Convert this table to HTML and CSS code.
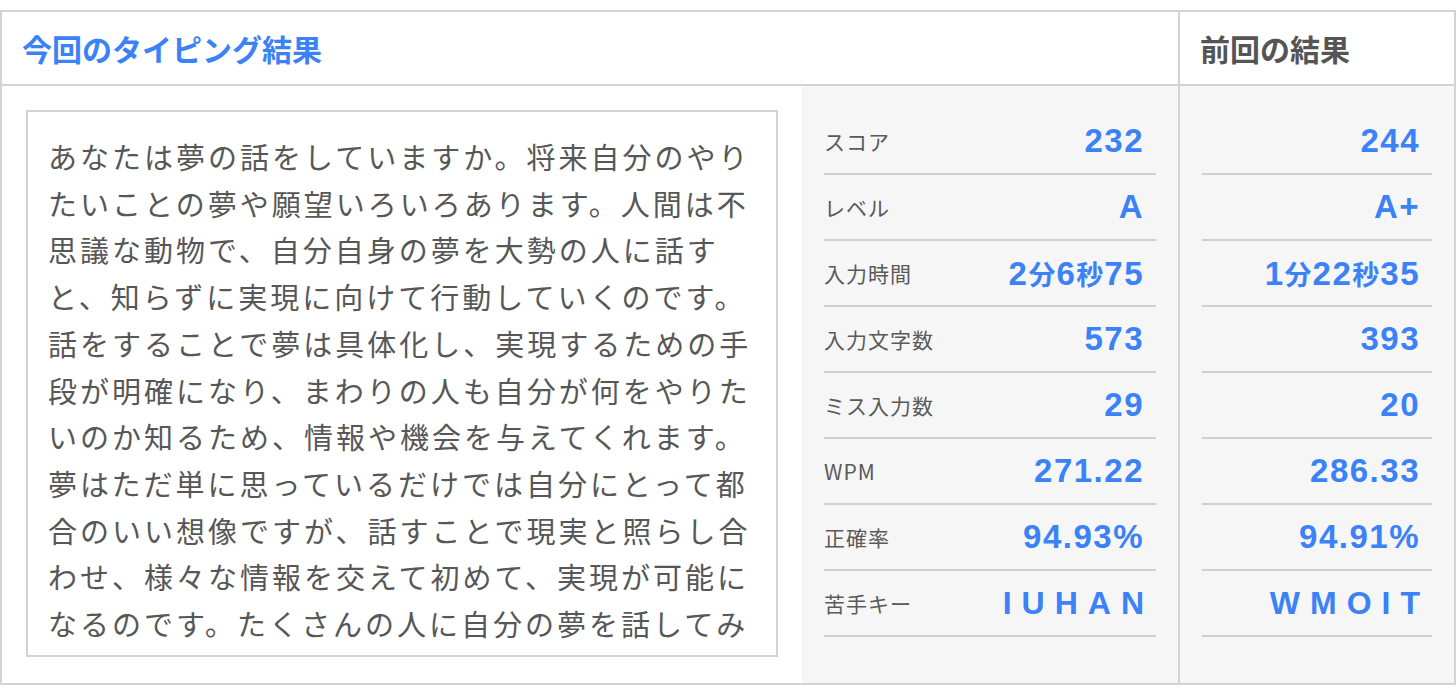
FILE: index.html
```html
<!DOCTYPE html>
<html lang="ja">
<head>
<meta charset="utf-8">
<title>タイピング結果</title>
<link rel="stylesheet" href="styles.css">
</head>
<body>
<div class="board">
  <div class="head head-current">今回のタイピング結果</div>
  <div class="head head-prev">前回の結果</div>
  <div class="current">
    <div class="text-col">
      <div class="text-box">あなたは夢の話をしていますか。将来自分のやりたいことの夢や願望いろいろあります。人間は不思議な動物で、自分自身の夢を大勢の人に話すと、知らずに実現に向けて行動していくのです。話をすることで夢は具体化し、実現するための手段が明確になり、まわりの人も自分が何をやりたいのか知るため、情報や機会を与えてくれます。夢はただ単に思っているだけでは自分にとって都合のいい想像ですが、話すことで現実と照らし合わせ、様々な情報を交えて初めて、実現が可能になるのです。たくさんの人に自分の夢を話してみることから始めましょう。</div>
    </div>
    <div class="stats">
      <div class="row"><span class="label">スコア</span><span class="value">232</span></div>
      <div class="row"><span class="label">レベル</span><span class="value">A</span></div>
      <div class="row"><span class="label">入力時間</span><span class="value">2<span class="unit">分</span>6<span class="unit">秒</span>75</span></div>
      <div class="row"><span class="label">入力文字数</span><span class="value">573</span></div>
      <div class="row"><span class="label">ミス入力数</span><span class="value">29</span></div>
      <div class="row"><span class="label">WPM</span><span class="value">271.22</span></div>
      <div class="row"><span class="label">正確率</span><span class="value">94.93%</span></div>
      <div class="row"><span class="label">苦手キー</span><span class="value keys">IUHAN</span></div>
    </div>
  </div>
  <div class="prev">
    <div class="row"><span class="value">244</span></div>
    <div class="row"><span class="value">A+</span></div>
    <div class="row"><span class="value">1<span class="unit">分</span>22<span class="unit">秒</span>35</span></div>
    <div class="row"><span class="value">393</span></div>
    <div class="row"><span class="value">20</span></div>
    <div class="row"><span class="value">286.33</span></div>
    <div class="row"><span class="value">94.91%</span></div>
    <div class="row"><span class="value keys">WMOIT</span></div>
  </div>
</div>
</body>
</html>
```

FILE: styles.css
```css
html, body {
  margin: 0;
  padding: 0;
  background: #ffffff;
}

body {
  font-family: "Liberation Sans", "Noto Sans CJK JP", sans-serif;
  color: #5a5a5a;
  padding-top: 10px;
}

.board {
  width: 1456px;
  height: 675px;
  box-sizing: border-box;
  border: 2px solid #d3d3d3;
  display: grid;
  grid-template-columns: 1176px 276px;
  grid-template-rows: 74px 1fr;
}

.head {
  box-sizing: border-box;
  border-bottom: 2px solid #d3d3d3;
  display: flex;
  align-items: center;
  padding-left: 20px;
  padding-bottom: 1px;
  font-family: "Noto Sans CJK JP", sans-serif;
  font-weight: 700;
  font-size: 30px;
}

.head-current {
  color: #3b82f6;
}

.head-prev {
  color: #555555;
  border-left: 2px solid #d3d3d3;
  padding-left: 20px;
}

.current {
  display: flex;
  min-height: 0;
}

.text-col {
  width: 800px;
  box-sizing: border-box;
  padding: 24px 24px 26px 24px;
  background: #ffffff;
  display: flex;
}

.text-box {
  flex: 1;
  box-sizing: border-box;
  border: 2px solid #d3d3d3;
  padding: 21px 10px 0 20px;
  overflow: hidden;
  font-family: "Noto Sans CJK JP", sans-serif;
  font-size: 29px;
  letter-spacing: 3px;
  line-height: 46.7px;
  color: #575757;
  line-break: strict;
}

.stats {
  flex: 1;
  background: #f6f6f6;
  padding: 23px 22px 0 22px;
}

.prev {
  background: #f6f6f6;
  border-left: 2px solid #d3d3d3;
  padding: 23px 22px 0 22px;
}

.row {
  box-sizing: border-box;
  height: 66px;
  border-bottom: 2px solid #d0d0d0;
  display: flex;
  align-items: center;
  justify-content: space-between;
  padding-right: 12px;
}

.prev .row {
  justify-content: flex-end;
}

.label {
  font-family: "Noto Sans CJK JP", sans-serif;
  font-size: 21px;
  color: #5a5a5a;
  letter-spacing: 1px;
}

.value {
  font-family: "Liberation Sans", "Noto Sans CJK JP", sans-serif;
  font-weight: 700;
  font-size: 33px;
  letter-spacing: 1.5px;
  color: #3b82f6;
}

.value .unit {
  font-family: "Noto Sans CJK JP", sans-serif;
  font-size: 27px;
  letter-spacing: 1px;
}

.value.keys {
  font-size: 32px;
  letter-spacing: 10px;
  margin-right: -10px;
}
```
